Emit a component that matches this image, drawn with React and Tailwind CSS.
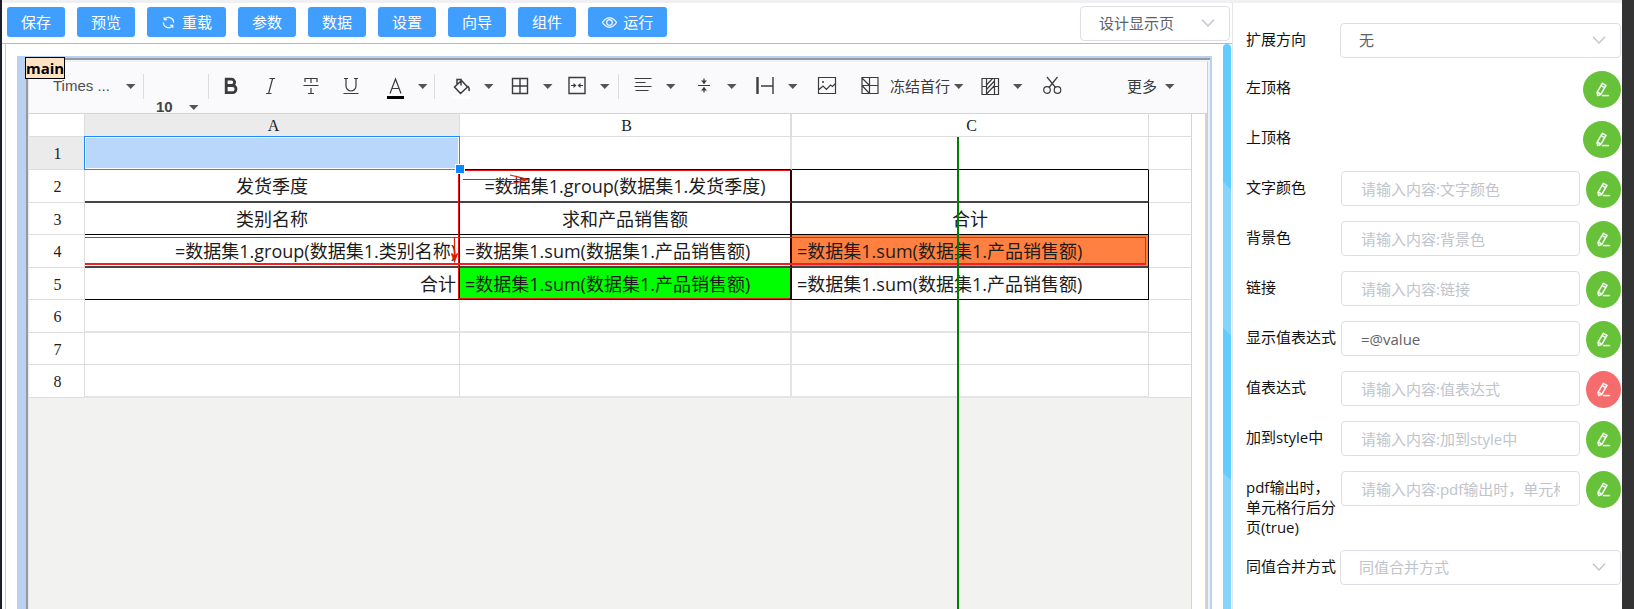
import React from "react";

const EDIT_PEN =
  "m199.04 672.64 193.984 112 224-387.968-193.92-112-224 388.032zm-23.872 60.16 32.896 148.288 144.896-45.696zM455.04 229.248l193.92 112 56.704-98.112-193.984-112-56.64 98.112zM104.32 708.8l384-665.024 304.768 175.936L409.152 884.8h.064l-248.448 78.336zm384 254.272v-64h448v64h-448z";
const REFRESH =
  "M771.776 794.88A384 384 0 0 1 128 512h64a320 320 0 0 0 555.712 216.448H654.72a32 32 0 1 1 0-64h149.056a32 32 0 0 1 32 32v148.928a32 32 0 1 1-64 0v-50.56zM276.288 295.616h92.992a32 32 0 0 1 0 64H220.16a32 32 0 0 1-32-32V178.56a32 32 0 0 1 64 0v50.56A384 384 0 0 1 896.128 512h-64a320 320 0 0 0-555.776-216.384z";
const VIEW =
  "M512 160c320 0 512 352 512 352S832 864 512 864 0 512 0 512s192-352 512-352m0 64c-225.28 0-384.128 208.064-436.8 288 52.608 79.872 211.456 288 436.8 288 225.28 0 384.128-208.064 436.8-288-52.608-79.872-211.456-288-436.8-288m0 64a224 224 0 1 1 0 448 224 224 0 0 1 0-448m0 64a160.192 160.192 0 0 0-160 160c0 88.192 71.744 160 160 160s160-71.808 160-160-71.744-160-160-160";

function Glyph({ d, weight = 16 }) {
  return (
    <svg
      viewBox="0 0 1024 1024"
      fill="currentColor"
      stroke="currentColor"
      strokeWidth={weight}
      className="size-[15px]"
      aria-hidden="true"
    >
      <path d={d} />
    </svg>
  );
}

/* ---------- page actions ---------- */

const ACTIONS = [
  { label: "保存" },
  { label: "预览" },
  { label: "重载", icon: REFRESH },
  { label: "参数" },
  { label: "数据" },
  { label: "设置" },
  { label: "向导" },
  { label: "组件" },
  { label: "运行", icon: VIEW },
];

function ActionBar() {
  return (
    <header className="flex items-start border-b border-[#bbbbbb] pt-[3px] pr-0.5 pb-0.5 pl-[5px]">
      <div className="flex gap-3 pt-px">
        {ACTIONS.map((a) => (
          <button
            key={a.label}
            type="button"
            className="flex h-[30px] items-center gap-1.5 rounded-[3px] bg-[#409eff] px-3.5 text-[15px] text-white"
          >
            {a.icon && <Glyph d={a.icon} />}
            {a.label}
          </button>
        ))}
      </div>
      <Dropdown label="页面" value="设计显示页" className="ml-auto w-[150px]" />
    </header>
  );
}

function Dropdown({ id, label, value, placeholder, className = "" }) {
  return (
    <div className={`relative ${className}`}>
      <select
        id={id}
        aria-label={label}
        className={`h-[35px] w-full appearance-none rounded border border-[#dcdfe6] bg-white pr-10 pl-[18px] text-[15px] ${
          placeholder ? "text-[#c0c4cc]" : "text-[#606266]"
        }`}
      >
        <option>{value}</option>
      </select>
      <svg
        viewBox="0 0 14 8"
        className="pointer-events-none absolute top-[13px] right-[15px] h-2 w-3.5"
        fill="none"
        stroke="#c0c4cc"
        strokeWidth="1.4"
        aria-hidden="true"
      >
        <path d="M1 .8 7 7 13 .8" />
      </svg>
    </div>
  );
}

/* ---------- sheet toolbar ---------- */

function Caret() {
  return (
    <svg viewBox="0 0 10 5" className="h-[5px] w-2.5 shrink-0" fill="#555555" aria-hidden="true">
      <path d="M0 0h9.500L4.750 5z" />
    </svg>
  );
}

function Divider({ className = "" }) {
  return <span className={`h-[25px] w-px shrink-0 bg-[#dcdcdf] ${className}`} />;
}

function Tool({ label, caret, className = "", children }) {
  return (
    <button type="button" aria-label={label} className={`flex shrink-0 items-center gap-[13px] ${className}`}>
      <svg viewBox="0 0 20 26" className="h-[26px] w-5" fill="none" stroke="#3b3b3b" strokeWidth="1.2" aria-hidden="true">
        {children}
      </svg>
      {caret && (
        <span className="pr-px">
          <Caret />
        </span>
      )}
    </button>
  );
}

function SheetToolbar() {
  return (
    <div className="flex h-[52px] border-b border-[#d4d4d4] bg-[#fafafd]">
      <div className="flex h-12 items-center pl-6">
        <label className="flex items-center">
          <select
            aria-label="字体"
            className="w-[73px] appearance-none bg-transparent font-['Liberation_Sans',sans-serif] text-[15px] text-[#505050]"
          >
            <option>Times ...</option>
          </select>
          <Caret />
        </label>
        <Divider className="ml-[7px]" />
      </div>
      <label className="flex h-3 items-center self-end pl-3 font-['Liberation_Sans',sans-serif] text-[15px] leading-3 font-bold text-[#444444]">
        <select aria-label="字号" className="h-3 w-[33px] appearance-none overflow-visible bg-transparent leading-3">
          <option>10</option>
        </select>
        <Caret />
      </label>
      <div className="flex h-12 min-w-0 flex-1 items-center pl-[9px]">
        <Divider />
        <Tool label="粗体" className="ml-3">
          <path strokeWidth="2.800" d="M5.200 6.200h5.300a3.100 3.100 0 0 1 0 6.300H5.200zM5.200 12.500h6.200a3.600 3.600 0 0 1 0 7.200H5.200zM5.200 5v16" />
        </Tool>
        <Tool label="斜体" className="ml-5">
          <path d="M8.500 5.500h5.500M5 20.500h5.500M11.600 5.500 7.600 20.500" />
        </Tool>
        <Tool label="删除线" className="ml-5">
          <path d="M4 9V5.500h12V9M2.500 12.500h15M10 5.500v4.500M10 15v5M7 20.500h6" />
        </Tool>
        <Tool label="下划线" className="ml-5">
          <path d="M3 5.500h4M13 5.500h4M5 5.500v7.500a5 5 0 0 0 10 0V5.500M2.500 20.500h15" />
        </Tool>
        <Tool label="文字颜色" caret className="ml-6">
          <path d="M5 20.500 10.500 6 16 20.500M7 15.500h7" />
          <path stroke="#000000" strokeWidth="3" d="M2 24.500h17" />
        </Tool>
        <Divider className="ml-[5px]" />
        <Tool label="填充颜色" caret className="ml-4">
          <path strokeWidth="1.500" d="m3.500 14 7-6.500 6 6.500-7 6.500zM6 11V6.500h4v6M16.500 13c1.500 1 2 2.500 1.500 5" />
          <path stroke="#ffffff" strokeWidth="3" d="M1 24.500h18" />
        </Tool>
        <Tool label="边框" caret className="ml-[15px]">
          <path strokeWidth="1.400" d="M2.500 5.500h15v15h-15zM10 5.500v15M2.500 13h15" />
        </Tool>
        <Tool label="合并单元格" caret className="ml-[13px]">
          <path strokeWidth="1.400" d="M2 4.500h16v16H2z" />
          <path d="M4 12.500h4.500M16 12.500h-4.500" />
          <path fill="#3b3b3b" stroke="none" d="m6.500 10 3 2.500-3 2.500zM13.500 10l-3 2.500 3 2.500z" />
        </Tool>
        <Divider className="ml-[7px]" />
        <Tool label="水平对齐" caret className="ml-3.5">
          <path d="M1.500 5.500h17M2.500 9.500h10M1.500 13.500h17M2.500 17.500h13" />
        </Tool>
        <Tool label="垂直对齐" caret className="ml-[17px]">
          <path d="M4 12.500h12M10 5.500v5M10 19.500v-5" />
          <path fill="#3b3b3b" stroke="none" d="M7 7.500h6L10 11zM7 17.500h6L10 14z" />
        </Tool>
        <Tool label="换行" caret className="ml-[17px]">
          <path strokeWidth="2.400" d="M2.500 4v17" />
          <path strokeWidth="1.400" d="M18 4v17M6 13h12" />
        </Tool>
        <Tool label="图片" className="ml-[18px]">
          <path d="M1.500 4.500h17v16h-17zM2 16.500l4-3.500 3.500 3.500 4-4.500 2 1.500 3-3" />
          <circle cx="6" cy="9" r="1" fill="#3b3b3b" stroke="none" />
        </Tool>
        <button type="button" className="ml-[23px] flex shrink-0 items-center text-[15px] text-[#3b3b3b]">
          <svg viewBox="0 0 20 26" className="mr-2.5 h-[26px] w-5" fill="none" stroke="#3b3b3b" strokeWidth="1.200" aria-hidden="true">
            <path d="M2 4.500h16v16H2zM9.500 4.500v16M2 12.500h16M2 5l7.500 7.500M2 12.500l7.500 8" />
          </svg>
          冻结首行
          <span className="ml-1">
            <Caret />
          </span>
        </button>
        <Tool label="条件格式" caret className="ml-4">
          <path d="M2 5.500h16.500v16H2zM6.500 5.500v16M14.500 5.500v16M2 13.500h4.500M14.500 13.500h4M6.500 12l6-6.500M6.500 16.500l8-8.500M6.500 21l8-8.500" />
        </Tool>
        <Tool label="剪切" className="ml-[18px]">
          <circle cx="5" cy="17" r="3.300" />
          <circle cx="15.500" cy="17" r="3.300" />
          <path d="M5 4l8.500 10.500M15.500 4 7 14.500" />
        </Tool>
        <button type="button" className="mr-8 ml-auto flex shrink-0 items-center gap-2 text-[15px] text-[#3b3b3b]">
          更多
          <Caret />
        </button>
      </div>
    </div>
  );
}

/* ---------- sheet ---------- */

const GRID = "border-[#dddddd]";
const SUM = "=数据集1.sum(数据集1.产品销售额)";

const ROWS = [
  { h: "h-[33px]", line: "border-b border-b-black", a: "", b: "", c: "" },
  { h: "h-[33px]", line: "border-b-2 border-b-[#444444]", a: "发货季度", b: "=数据集1.group(数据集1.发货季度)", c: "" },
  { h: "h-8", line: "border-b border-b-black", a: "类别名称", b: "求和产品销售额", c: "合计" },
  {
    h: "h-[33px]",
    line: "border-b-2 border-b-[#444444]",
    a: "=数据集1.group(数据集1.类别名称)",
    b: SUM,
    c: SUM,
    aAlign: "text-right",
    bAlign: "text-left",
    cAlign: "text-left bg-[#ff8040]",
  },
  {
    h: "h-8",
    line: "border-b border-b-black",
    a: "合计",
    b: SUM,
    c: SUM,
    aAlign: "text-right",
    bAlign: "text-left bg-[#00ff00]",
    cAlign: "text-left",
  },
  { h: "h-[33px]", plain: "border-b-2 border-b-[#e4e4e4]" },
  { h: "h-8", plain: "border-b border-b-[#dddddd]" },
  { h: "h-[33px]", plain: "border-b-2 border-b-[#e4e4e4]" },
];

function Sheet() {
  return (
    <div className="relative flex flex-1 flex-col border-r border-[#d4d4d4] bg-[#f2f2f0]">
      <table className="w-full table-fixed border-separate border-spacing-0 bg-white text-[18px] leading-6 text-[#1c1c1c]">
        <colgroup>
          <col className="w-14" />
          <col className="w-[375px]" />
          <col className="w-[332px]" />
          <col className="w-[357px]" />
          <col />
        </colgroup>
        <thead className="font-['Liberation_Serif',serif] text-base leading-5">
          <tr className="h-[23px]">
            <th className={`border-r border-b p-0 ${GRID}`} />
            <th className={`border-r border-b bg-[#ebebeb] pt-0.5 pr-0 pb-0 pl-[3px] font-normal ${GRID}`}>A</th>
            <th className={`border-r-2 border-b pt-0.5 pr-0 pb-0 pl-[3px] font-normal ${GRID}`}>B</th>
            <th className={`border-r border-b pt-0.5 pr-0 pb-0 pl-[3px] font-normal ${GRID}`}>C</th>
            <th className={`border-b p-0 ${GRID}`} />
          </tr>
        </thead>
        <tbody>
          {ROWS.map((r, i) => {
            const framed = i >= 1 && i <= 4;
            const bottom = r.line || r.plain;
            const edge = framed ? "border-r-black" : "border-r-[#dddddd]";
            return (
              <tr key={i} className={r.h}>
                <th
                  className={`border-r border-b pt-0.5 pr-0 pb-0 pl-0.5 font-['Liberation_Serif',serif] text-base leading-5 font-normal ${GRID} ${
                    i === 0 ? "bg-[#ebebeb]" : ""
                  }`}
                >
                  {i + 1}
                </th>
                <td className={`overflow-hidden border-r px-[3px] py-0 whitespace-nowrap ${bottom} ${edge} ${r.aAlign || "text-center"}`}>
                  {r.a}
                </td>
                <td
                  className={`border-r-2 px-[5px] py-0 whitespace-nowrap ${bottom} ${
                    framed ? "border-r-[#3a0000]" : "border-r-[#e4e4e4]"
                  } ${r.bAlign || "text-center"}`}
                >
                  {r.b}
                </td>
                <td className={`border-r px-[5px] py-0 whitespace-nowrap ${bottom} ${edge} ${r.cAlign || "text-center"}`}>{r.c}</td>
                <td className={`border-b p-0 ${GRID}`} />
              </tr>
            );
          })}
        </tbody>
      </table>

      {/* group ranges */}
      <div className="pointer-events-none absolute top-14 left-[429px] h-[129px] w-[332px] border-t border-b border-l border-[#ee1111]" />
      <div className="pointer-events-none absolute top-[123px] left-14 h-[28px] w-[1061px] border-t border-r border-b-2 border-[#ee2222]" />
      <svg
        className="pointer-events-none absolute top-14 left-[420px] h-24 w-24"
        viewBox="0 0 96 96"
        fill="none"
        stroke="#d81e06"
        strokeWidth="1.200"
        aria-hidden="true"
      >
        <path d="M14 9.500h64M61 5l18 4.500M61 14l18-4.500M66 6l13 3.500-13 3.500M5.500 67v23" />
        <path fill="#d81e06" d="M2.500 83.500l3 8 3-8-3 3z" />
      </svg>

      {/* active cell */}
      <div className="pointer-events-none absolute top-[22px] left-[55px] h-[34px] w-[376px] border border-[#1a8cff] bg-[#b9d7fb] ring-1 ring-white ring-inset" />
      <div className="pointer-events-none absolute top-[50px] left-[426px] size-2.5 border border-white bg-[#0a8aff]" />

      {/* page width guide */}
      <div className="pointer-events-none absolute top-[23px] bottom-0 left-[928px] w-0.5 bg-[#008000]" />
    </div>
  );
}

function Designer() {
  return (
    <div className="relative mt-3 mr-[11px] ml-[11px] flex flex-1 flex-col bg-[#b9d2f1] pt-0.5 pr-0.5 pl-[9px]">
      <div className="flex flex-1 flex-col border-t-2 border-l-2 border-[#999999] bg-[#eef2f8] pt-px pr-0.5">
        <div className="flex flex-1 flex-col border-t border-r border-l border-t-[#eef2f8] border-r-[#b9d2f1] border-l-[#e8e8ee] bg-white">
          <SheetToolbar />
          <div className="flex flex-1 border-r-2 border-[#d4d4d4] pr-[13px]">
            <Sheet />
          </div>
        </div>
      </div>
      <span className="absolute top-px left-2 border border-black bg-[#ffe4c4] text-[15px] leading-5 font-bold text-black">
        main
      </span>
    </div>
  );
}

/* ---------- property panel ---------- */

const FIELDS = [
  { id: "expand", label: "扩展方向", type: "select", value: "无" },
  { id: "left", label: "左顶格", type: "button" },
  { id: "top", label: "上顶格", type: "button" },
  { id: "color", label: "文字颜色" },
  { id: "bg", label: "背景色" },
  { id: "link", label: "链接" },
  { id: "display", label: "显示值表达式", value: "=@value" },
  { id: "value", label: "值表达式", danger: true },
  { id: "style", label: "加到style中" },
  { id: "pdf", label: "pdf输出时，单元格行后分页(true)" },
  { id: "merge", label: "同值合并方式", type: "select", value: "同值合并方式", placeholder: true },
];

function EditButton({ id, label, danger, wide }) {
  return (
    <button
      id={id}
      type="button"
      aria-label={`编辑${label}`}
      className={`flex h-[37px] shrink-0 items-center justify-center rounded-[50%] text-white ${
        danger ? "bg-[#f56c6c]" : "bg-[#67c23a]"
      } ${wide ? "w-[38px]" : "w-[35px]"}`}
    >
      <Glyph d={EDIT_PEN} weight={36} />
    </button>
  );
}

function Field({ f }) {
  return (
    <div className="flex items-start">
      <label htmlFor={f.id} className="w-[94px] shrink-0 pt-1.5 text-[15px] leading-5 text-[#111111]">
        {f.label}
      </label>
      {f.type === "select" && (
        <Dropdown id={f.id} value={f.value} placeholder={f.placeholder} className="flex-1" />
      )}
      {f.type === "button" && (
        <div className="flex flex-1 justify-end">
          <EditButton id={f.id} label={f.label} wide />
        </div>
      )}
      {!f.type && (
        <div className="flex min-w-0 flex-1 gap-1.5 pl-px">
          <input
            id={f.id}
            type="text"
            defaultValue={f.value}
            placeholder={`请输入内容:${f.label}`}
            className="h-[35px] min-w-0 flex-1 rounded border border-[#dcdfe6] bg-white px-[19px] text-[15px] text-[#606266] placeholder:text-[#c0c4cc]"
          />
          <EditButton label={f.label} danger={f.danger} />
        </div>
      )}
    </div>
  );
}

function PropertyPanel() {
  return (
    <aside className="flex w-[390px] shrink-0 flex-col gap-[13px] border-l border-[#e6e6e6] bg-white pt-5 pr-px pl-[13px]">
      {FIELDS.map((f) => (
        <Field key={f.id} f={f} />
      ))}
    </aside>
  );
}

export default function App() {
  return (
    <div className="flex min-h-screen border-l-2 border-[#1a1f2b] bg-white font-['Open_Sans','Noto_Sans_CJK_SC',sans-serif]">
      <div className="flex min-w-0 flex-1 flex-col border-t-[3px] border-[#f0f0f3]">
        <div className="flex flex-1">
          <main className="flex min-w-0 flex-1 flex-col">
            <ActionBar />
            <div className="ml-[3px] flex flex-1 border-l border-[#cccccc]">
              <Designer />
              <div className="mr-px w-2 rounded-t bg-[repeating-linear-gradient(225deg,#60ccff_0_103px,#84d6ff_103px_206px)]" />
            </div>
          </main>
          <PropertyPanel />
        </div>
      </div>
      <div className="w-3 shrink-0 bg-[#333333]" />
    </div>
  );
}
